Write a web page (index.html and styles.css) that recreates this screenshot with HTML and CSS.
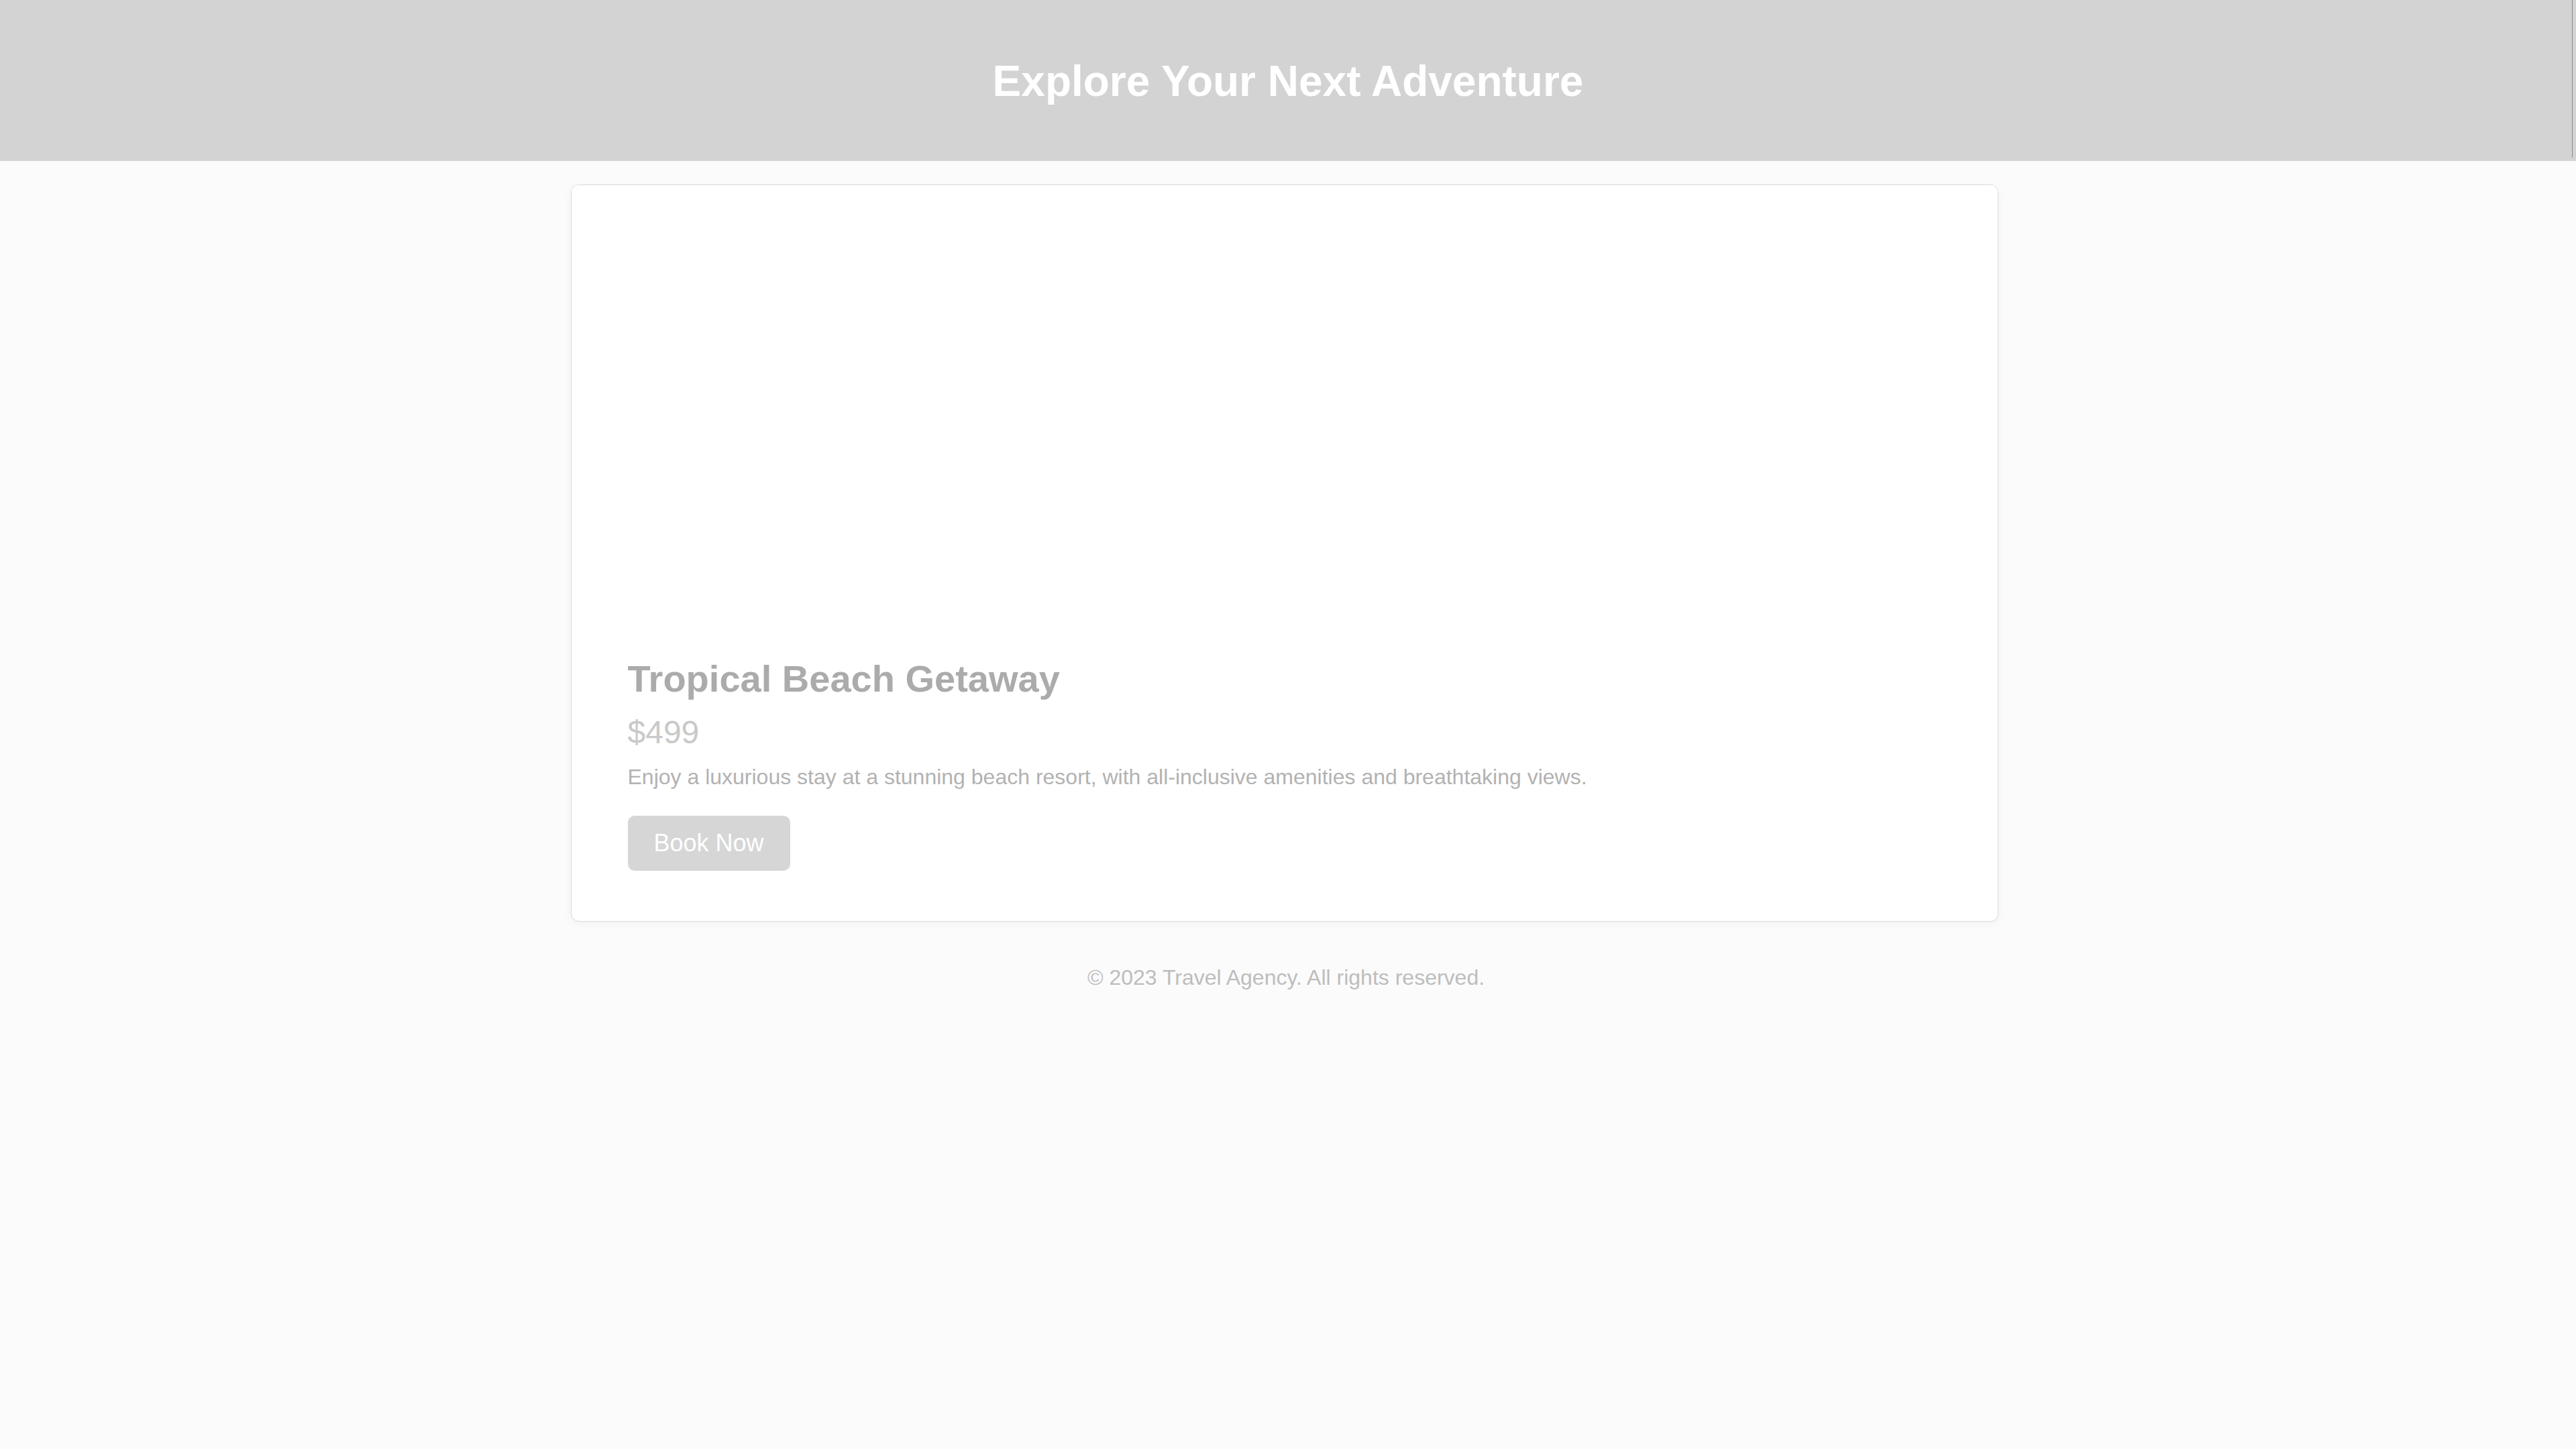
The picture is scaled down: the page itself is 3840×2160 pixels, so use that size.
FILE: index.html
```html
<!DOCTYPE html>
<html lang="en">
<head>
<meta charset="utf-8">
<title>Explore Your Next Adventure</title>
<link rel="stylesheet" href="styles.css">
</head>
<body>
<header class="site-header">
  <h1 class="site-title">Explore Your Next Adventure</h1>
</header>
<main class="page">
  <article class="card">
    <div class="card-image"></div>
    <div class="card-body">
      <h2 class="card-title">Tropical Beach Getaway</h2>
      <p class="card-price">$499</p>
      <p class="card-text">Enjoy a luxurious stay at a stunning beach resort, with all-inclusive amenities and breathtaking views.</p>
      <a class="btn" href="#">Book Now</a>
    </div>
  </article>
</main>
<footer class="site-footer">
  <p class="footer-text">© 2023 Travel Agency. All rights reserved.</p>
</footer>
</body>
</html>
```
FILE: styles.css
```css
html, body {
  margin: 0;
  padding: 0;
}
body {
  background: #fbfbfb;
  font-family: "Liberation Sans", Arial, sans-serif;
  min-height: 2160px;
}
.site-header {
  position: relative;
  height: 240px;
  background: #d3d3d3;
  display: flex;
  align-items: center;
  justify-content: center;
}
.site-header::after {
  content: "";
  position: absolute;
  right: 5px;
  top: 0;
  width: 1px;
  height: 235px;
  background: #8a8a8a;
}
.site-title {
  margin: 0;
  font-size: 64px;
  font-weight: bold;
  color: #ffffff;
  line-height: 1.15;
  position: relative;
  top: 2px;
}
.page {
  display: flex;
  justify-content: center;
  padding: 35px 11px 0 0;
}
.card {
  width: 2128px;
  box-sizing: border-box;
  background: #ffffff;
  border: 1px solid #dadada;
  border-radius: 12px;
  box-shadow: 0 4px 14px rgba(0, 0, 0, 0.04);
  overflow: hidden;
}
.card-image {
  height: 620px;
  background: #ffffff;
}
.card-body {
  padding: 84px 84px 75px;
}
.card-title {
  margin: 0 0 20px;
  font-size: 56px;
  font-weight: bold;
  line-height: 1.15;
  color: #ababab;
}
.card-price {
  margin: 0 0 20px;
  font-size: 48px;
  line-height: 1.15;
  color: #c9c9c9;
}
.card-text {
  margin: 0 0 40px;
  font-size: 32px;
  line-height: 1.15;
  color: #b2b2b2;
}
.btn {
  display: inline-block;
  padding: 20px 39px;
  font-size: 36px;
  line-height: 1.15;
  color: #ffffff;
  background: #d6d6d6;
  border-radius: 10px;
  text-decoration: none;
}
.site-footer {
  display: flex;
  justify-content: center;
  padding: 65px 6px 0 0;
}
.footer-text {
  margin: 0;
  font-size: 32px;
  line-height: 1.15;
  color: #bdbdbd;
}
```
